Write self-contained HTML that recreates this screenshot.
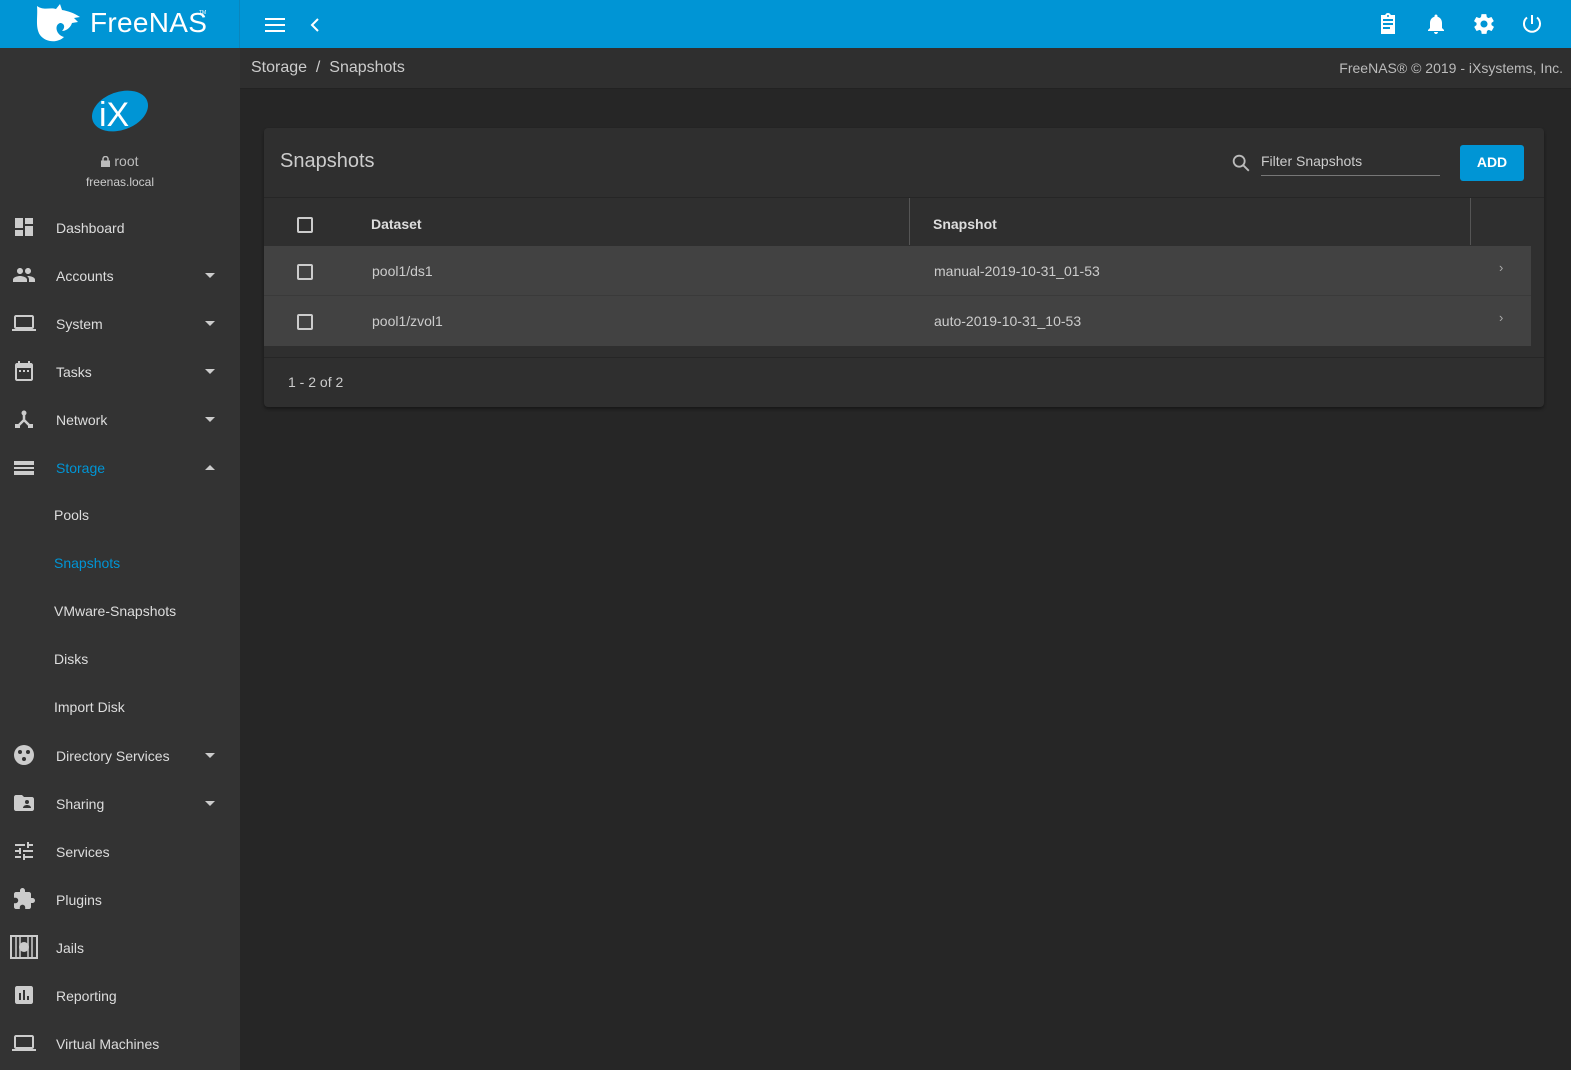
<!DOCTYPE html>
<html><head><meta charset="utf-8"><style>
*{box-sizing:border-box;margin:0;padding:0}
body{width:1571px;height:1070px;overflow:hidden;background:#262626;font-family:"Liberation Sans",sans-serif;color:#ccc;position:relative}
.top{position:absolute;left:0;top:0;width:1571px;height:48px;background:#0095d5}
.logo{position:absolute;left:0;top:0;width:240px;height:48px;border-right:1px solid #0a86bd}
.side{position:absolute;left:0;top:48px;width:240px;height:1022px;background:#333}
.crumb{position:absolute;left:240px;top:48px;right:0;height:41px;background:#2f2f2f;border-bottom:1px solid #222}
.item{position:absolute;left:0;width:240px;height:48px;font-size:14px;color:#ddd}
.item .t{position:absolute;left:56px;top:17px}
.item svg{position:absolute;left:12px;top:12px}
.item .ar{position:absolute;left:205px;top:22px;width:0;height:0;border-left:5px solid transparent;border-right:5px solid transparent;border-top:5px solid #ccc}
.sub{position:absolute;left:54px;font-size:14px;color:#ddd}
.card{position:absolute;left:264px;top:128px;width:1280px;height:279px;background:#2f2f2f;border-radius:4px;box-shadow:0 2px 3px rgba(0,0,0,.4)}
.cb{position:absolute;width:16px;height:16px;border:2px solid #ccc;border-radius:2px}
.row{position:absolute;left:0;width:1267px;height:50px;background:#424242}
</style></head><body>
<div class="top">
 <div class="logo">
  <svg width="60" height="46" viewBox="0 0 60 46" style="position:absolute;left:32px;top:1px"><path d="M5 5 C12 10 18 6 24 8 L28 3 L30 9 C36 10 42 12 48 16 L42 17 L46 21 L40 22 C38 28 33 30 30 30 C34 26 32 22 28 22 C22 24 24 34 32 36 C26 42 14 42 8 34 C3 26 6 16 5 5Z" fill="#fff"/></svg>
  <span style="position:absolute;left:90px;top:7px;font-size:28px;color:#fff;letter-spacing:0.3px;font-weight:300">FreeNAS</span><span style="position:absolute;left:199px;top:10px;font-size:5px;color:#fff">TM</span>
 </div>
 <svg width="22" height="16" style="position:absolute;left:265px;top:17px"><rect y="1" width="20" height="2" fill="#fff"/><rect y="7" width="20" height="2" fill="#fff"/><rect y="13" width="20" height="2" fill="#fff"/></svg>
 <svg width="12" height="14" style="position:absolute;left:310px;top:18px"><path d="M8 1 L2 7 L8 13" stroke="#fff" stroke-width="2" fill="none"/></svg>
 <svg width="24" height="24" viewBox="0 0 24 24" style="position:absolute;left:1376px;top:12px"><path d="M19 3h-4.2C14.4 1.8 13.3 1 12 1s-2.4.8-2.8 2H5v19h14V3zm-7 0c.6 0 1 .4 1 1s-.4 1-1 1-1-.4-1-1 .4-1 1-1zm2 14H7v-2h7v2zm3-4H7v-2h10v2zm0-4H7V7h10v2z" fill="#fff"/></svg>
 <svg width="24" height="24" viewBox="0 0 24 24" style="position:absolute;left:1424px;top:12px"><path d="M12 22c1.1 0 2-.9 2-2h-4c0 1.1.9 2 2 2zm6-6v-5c0-3.1-1.6-5.6-4.5-6.3V4c0-.8-.7-1.5-1.5-1.5s-1.5.7-1.5 1.5v.7C7.6 5.4 6 7.9 6 11v5l-2 2v1h16v-1l-2-2z" fill="#fff"/></svg>
 <svg width="24" height="24" viewBox="0 0 24 24" style="position:absolute;left:1472px;top:12px"><path d="M19.4 13c.1-.3.1-.7.1-1s0-.7-.1-1l2.1-1.6c.2-.2.2-.4.1-.6l-2-3.5c-.1-.2-.4-.3-.6-.2l-2.5 1c-.5-.4-1.1-.7-1.7-1l-.4-2.6c0-.3-.2-.4-.5-.4h-4c-.3 0-.5.2-.5.4l-.4 2.6c-.6.3-1.2.6-1.7 1l-2.5-1c-.2-.1-.5 0-.6.2l-2 3.5c-.1.2-.1.4.1.6L4.6 11c0 .3-.1.7-.1 1s0 .7.1 1l-2.1 1.6c-.2.2-.2.4-.1.6l2 3.5c.1.2.4.3.6.2l2.5-1c.5.4 1.1.7 1.7 1l.4 2.6c0 .3.2.4.5.4h4c.3 0 .5-.2.5-.4l.4-2.6c.6-.3 1.2-.6 1.7-1l2.5 1c.2.1.5 0 .6-.2l2-3.5c.1-.2.1-.4-.1-.6L19.4 13zM12 15.5c-1.9 0-3.5-1.6-3.5-3.5s1.6-3.5 3.5-3.5 3.5 1.6 3.5 3.5-1.6 3.5-3.5 3.5z" fill="#fff"/></svg>
 <svg width="24" height="24" viewBox="0 0 24 24" style="position:absolute;left:1520px;top:12px"><path d="M12 3v9M7 5.5A8 8 0 1 0 17 5.5" stroke="#fff" stroke-width="2" fill="none"/></svg>
</div>
<div class="side">
 <svg width="60" height="46" viewBox="0 0 60 46" style="position:absolute;left:90px;top:40px"><ellipse cx="30" cy="23" rx="29" ry="19" transform="rotate(-20 30 23)" fill="#0095d5"/><text x="9" y="38" font-size="34" fill="#fff" font-family="Liberation Sans">iX</text></svg>
 <div style="position:absolute;left:0;width:240px;top:105px;text-align:center;font-size:14px;color:#bbb"><svg width="9" height="11" viewBox="0 0 9 11" style="vertical-align:-1px"><rect x="0" y="4.5" width="9" height="6.5" fill="#bbb"/><path d="M2 5V3a2.5 2.5 0 0 1 5 0v2" stroke="#bbb" stroke-width="1.5" fill="none"/></svg> root</div>
 <div style="position:absolute;left:0;width:240px;top:127px;text-align:center;font-size:12px;color:#ccc">freenas.local</div>
 <div class="item" style="top:155px"><svg width="24" height="24" viewBox="0 0 24 24"><path d="M3 13h8V3H3v10zm0 8h8v-6H3v6zm10 0h8V11h-8v10zm0-18v6h8V3h-8z" fill="#ccc"/></svg><span class="t">Dashboard</span></div>
 <div class="item" style="top:203px"><svg width="24" height="24" viewBox="0 0 24 24"><path d="M16 11c1.7 0 3-1.3 3-3s-1.3-3-3-3-3 1.3-3 3 1.3 3 3 3zm-8 0c1.7 0 3-1.3 3-3S9.7 5 8 5 5 6.3 5 8s1.3 3 3 3zm0 2c-2.3 0-7 1.2-7 3.5V19h14v-2.5c0-2.3-4.7-3.5-7-3.5zm8 0h-1c1.2.8 2 2 2 3.5V19h6v-2.5c0-2.3-4.7-3.5-7-3.5z" fill="#ccc"/></svg><span class="t">Accounts</span><span class="ar"></span></div>
 <div class="item" style="top:251px"><svg width="24" height="24" viewBox="0 0 24 24"><path d="M20 18c1.1 0 2-.9 2-2V6c0-1.1-.9-2-2-2H4c-1.1 0-2 .9-2 2v10c0 1.1.9 2 2 2H0v2h24v-2h-4zM4 6h16v10H4V6z" fill="#ccc"/></svg><span class="t">System</span><span class="ar"></span></div>
 <div class="item" style="top:299px"><svg width="24" height="24" viewBox="0 0 24 24"><path d="M9 11H7v2h2v-2zm4 0h-2v2h2v-2zm4 0h-2v2h2v-2zm2-7h-1V2h-2v2H8V2H6v2H5c-1.1 0-2 .9-2 2v14c0 1.1.9 2 2 2h14c1.1 0 2-.9 2-2V6c0-1.1-.9-2-2-2zm0 16H5V9h14v11z" fill="#ccc"/></svg><span class="t">Tasks</span><span class="ar"></span></div>
 <div class="item" style="top:347px"><svg width="24" height="24" viewBox="0 0 24 24"><circle cx="12" cy="6" r="2.5" fill="#ccc"/><path d="M12 8v5l-6 6M12 13l6 6" stroke="#ccc" stroke-width="2.5" fill="none"/><rect x="3" y="17" width="5" height="4" fill="#ccc"/><rect x="16" y="17" width="5" height="4" fill="#ccc"/></svg><span class="t">Network</span><span class="ar"></span></div>
 <div class="item" style="top:395px"><svg width="24" height="24" viewBox="0 0 24 24"><path d="M2 20h20v-4H2v4zm0-14v4h20V6H2zm0 8h20v-2H2v2z" fill="#ccc"/></svg><span class="t" style="color:#0095d5">Storage</span><span class="ar" style="border-top:0;border-bottom:5px solid #ccc"></span></div>
 <div class="sub" style="top:459px">Pools</div>
 <div class="sub" style="top:507px;color:#0095d5">Snapshots</div>
 <div class="sub" style="top:555px">VMware-Snapshots</div>
 <div class="sub" style="top:603px">Disks</div>
 <div class="sub" style="top:651px">Import Disk</div>
 <div class="item" style="top:683px"><svg width="24" height="24" viewBox="0 0 24 24"><circle cx="12" cy="12" r="10" fill="#ccc"/><circle cx="8" cy="9" r="2" fill="#333"/><circle cx="16" cy="9" r="2" fill="#333"/><circle cx="12" cy="16" r="2" fill="#333"/></svg><span class="t">Directory Services</span><span class="ar"></span></div>
 <div class="item" style="top:731px"><svg width="24" height="24" viewBox="0 0 24 24"><path d="M20 6h-8l-2-2H4c-1.1 0-2 .9-2 2v12c0 1.1.9 2 2 2h16c1.1 0 2-.9 2-2V8c0-1.1-.9-2-2-2z" fill="#ccc"/><circle cx="15" cy="11" r="2" fill="#333"/><path d="M11 17c0-2 2-3 4-3s4 1 4 3z" fill="#333"/></svg><span class="t">Sharing</span><span class="ar"></span></div>
 <div class="item" style="top:779px"><svg width="24" height="24" viewBox="0 0 24 24"><path d="M3 17v2h6v-2H3zM3 5v2h10V5H3zm10 16v-2h8v-2h-8v-2h-2v6h2zM7 9v2H3v2h4v2h2V9H7zm14 4v-2H11v2h10zm-6-4h2V7h4V5h-4V3h-2v6z" fill="#ccc"/></svg><span class="t">Services</span></div>
 <div class="item" style="top:827px"><svg width="24" height="24" viewBox="0 0 24 24"><path d="M20.5 11H19V7c0-1.1-.9-2-2-2h-4V3.5C13 2.1 11.9 1 10.5 1S8 2.1 8 3.5V5H4c-1.1 0-2 .9-2 2v3.8h1.5c1.5 0 2.7 1.2 2.7 2.7S5 16.2 3.5 16.2H2V20c0 1.1.9 2 2 2h3.8v-1.5c0-1.5 1.2-2.7 2.7-2.7s2.7 1.2 2.7 2.7V22H17c1.1 0 2-.9 2-2v-4h1.5c1.4 0 2.5-1.1 2.5-2.5S21.9 11 20.5 11z" fill="#ccc"/></svg><span class="t">Plugins</span></div>
 <div class="item" style="top:875px"><svg width="28" height="24" viewBox="0 0 28 24" style="left:10px"><rect x="1" y="1" width="26" height="22" fill="none" stroke="#ccc" stroke-width="2"/><path d="M6 1v22M22 1v22M10 1v22M18 1v22" stroke="#ccc" stroke-width="1.5"/><circle cx="14" cy="12" r="5" fill="#ccc"/></svg><span class="t">Jails</span></div>
 <div class="item" style="top:923px"><svg width="24" height="24" viewBox="0 0 24 24"><path d="M19 3H5c-1.1 0-2 .9-2 2v14c0 1.1.9 2 2 2h14c1.1 0 2-.9 2-2V5c0-1.1-.9-2-2-2zM9 17H7v-7h2v7zm4 0h-2V7h2v10zm4 0h-2v-4h2v4z" fill="#ccc"/></svg><span class="t">Reporting</span></div>
 <div class="item" style="top:971px"><svg width="24" height="24" viewBox="0 0 24 24"><path d="M20 18c1.1 0 2-.9 2-2V6c0-1.1-.9-2-2-2H4c-1.1 0-2 .9-2 2v10c0 1.1.9 2 2 2H0v2h24v-2h-4zM4 6h16v10H4V6z" fill="#ccc"/></svg><span class="t">Virtual Machines</span></div>
</div>
<div class="crumb">
 <span style="position:absolute;left:11px;top:11px;font-size:16px;color:#ccc">Storage &nbsp;/&nbsp;&nbsp;Snapshots</span>
 <span style="position:absolute;right:8px;top:12px;font-size:14px;color:#bbb">FreeNAS® © 2019 - iXsystems, Inc.</span>
</div>
<div class="card">
 <div style="position:absolute;left:16px;top:22px;font-size:20px;color:#ccc">Snapshots</div>
 <svg width="22" height="22" viewBox="0 0 24 24" style="position:absolute;left:966px;top:24px"><circle cx="10" cy="10" r="6" stroke="#bbb" stroke-width="2" fill="none"/><path d="M14.5 14.5l6 6" stroke="#bbb" stroke-width="2"/></svg>
 <div style="position:absolute;left:997px;top:25px;font-size:14px;color:#ccc">Filter Snapshots</div>
 <div style="position:absolute;left:997px;top:47px;width:179px;height:1px;background:#777"></div>
 <div style="position:absolute;left:1196px;top:17px;width:64px;height:36px;background:#0095d5;border-radius:3px;color:#fff;font-size:14px;font-weight:bold;text-align:center;line-height:34px">ADD</div>
 <div style="position:absolute;left:0;top:69px;width:1280px;height:1px;background:#262626"></div>
 <div class="cb" style="left:33px;top:89px"></div>
 <div style="position:absolute;left:107px;top:88px;font-size:14px;font-weight:bold;color:#ddd">Dataset</div>
 <div style="position:absolute;left:645px;top:70px;width:1px;height:47px;background:#555"></div>
 <div style="position:absolute;left:669px;top:88px;font-size:14px;font-weight:bold;color:#ddd">Snapshot</div>
 <div style="position:absolute;left:1206px;top:70px;width:1px;height:47px;background:#555"></div>
 <div class="row" style="top:118px;border-bottom:1px solid #3a3a3a"><div class="cb" style="left:33px;top:18px"></div><span style="position:absolute;left:108px;top:17px;font-size:14px;color:#ccc">pool1/ds1</span><span style="position:absolute;left:670px;top:17px;font-size:14px;color:#ccc">manual-2019-10-31_01-53</span><span style="position:absolute;left:1235px;top:14px;font-size:13px;color:#aaa">›</span></div>
 <div class="row" style="top:168px"><div class="cb" style="left:33px;top:18px"></div><span style="position:absolute;left:108px;top:17px;font-size:14px;color:#ccc">pool1/zvol1</span><span style="position:absolute;left:670px;top:17px;font-size:14px;color:#ccc">auto-2019-10-31_10-53</span><span style="position:absolute;left:1235px;top:14px;font-size:13px;color:#aaa">›</span></div>
 <div style="position:absolute;left:0;top:229px;width:1280px;height:1px;background:#262626"></div>
 <div style="position:absolute;left:24px;top:246px;font-size:14px;color:#ccc">1 - 2 of 2</div>
</div>
</body></html>
